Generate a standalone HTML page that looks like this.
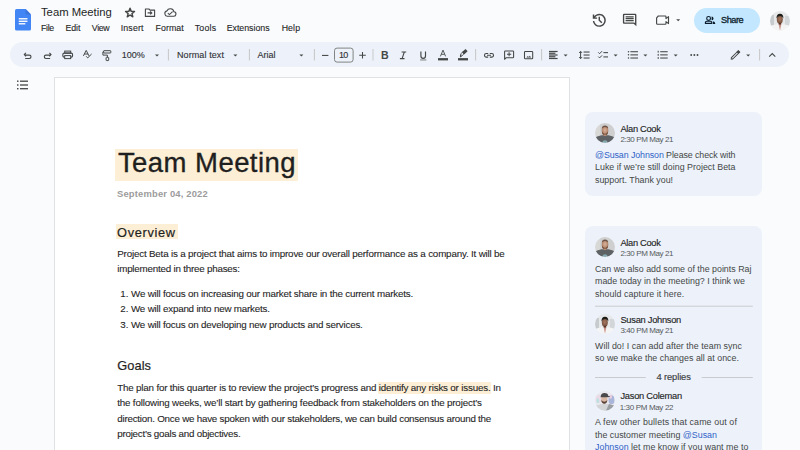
<!DOCTYPE html>
<html><head><meta charset="utf-8">
<style>
html,body{margin:0;padding:0;}
body{width:800px;height:450px;overflow:hidden;position:relative;background:#f9fbfd;font-family:"Liberation Sans",sans-serif;}
.t{position:absolute;white-space:nowrap;line-height:1;}
.bgx{position:absolute;}
.hl{}
.mention{color:#2f62c9;}
#toolbar{left:10px;top:42px;width:779px;height:25px;border-radius:12.5px;background:#edf2fa;}
#page{left:54px;top:77px;width:516px;height:400px;background:#fff;border:1px solid #dfe1e3;box-sizing:border-box;}
#share_btn{left:694px;top:7.5px;width:66px;height:25px;border-radius:12.5px;background:#c2e7ff;}
.card{position:absolute;left:585px;width:177px;background:#edf2fa;border-radius:8px;}
#hl_title{left:115px;top:149.3px;width:182.5px;height:32.2px;background:#fdefd6;}
#hl_ov{left:115.5px;top:224px;width:62px;height:14.8px;background:#fdefd6;}
#hl_p2{left:378.4px;top:382.4px;width:112.6px;height:11.2px;background:#fdefd6;}
svg{position:absolute;left:0;top:0;}
</style></head><body>
<div class="bgx" id="toolbar"></div>
<div class="bgx" id="page"></div>
<div class="bgx" id="share_btn"></div>
<div class="bgx card" id="card1" style="top:112.3px;height:83.6px;"></div>
<div class="bgx card" id="card2" style="top:226.4px;height:260px;"></div>
<div class="bgx" id="hl_title"></div>
<div class="bgx" id="hl_ov"></div>
<div class="bgx" id="hl_p2"></div>
<svg class="bgx" width="800" height="450" viewBox="0 0 800 450">
<g transform="translate(15,9)">
<path d="M1.6 0H10.6L16 5.4V19.9Q16 21.5 14.4 21.5H1.6Q0 21.5 0 19.9V1.6Q0 0 1.6 0Z" fill="#4285f4"/>
<path d="M10.6 0V4Q10.6 5.4 12 5.4H16Z" fill="#3b76dc"/>
<rect x="3.75" y="9.1" width="8.7" height="1.35" fill="#fff"/>
<rect x="3.75" y="11.6" width="8.7" height="1.35" fill="#fff"/>
<rect x="3.75" y="14.1" width="6.6" height="1.35" fill="#fff"/>
</g>
<polygon points="130.05,8.30 131.23,11.38 134.52,11.55 131.95,13.62 132.81,16.80 130.05,15.00 127.29,16.80 128.15,13.62 125.58,11.55 128.87,11.38" fill="none" stroke="#444746" stroke-width="1.45" stroke-linejoin="round"/>
<path d="M145.4 9.0H148.9L150 10.1H154.6V16.4H145.4Z" fill="none" stroke="#444746" stroke-width="1.1" stroke-linejoin="round"/>
<path d="M147.6 12.9H151.6M150.2 11.4L151.8 12.9L150.2 14.4" fill="none" stroke="#444746" stroke-width="1.1"/>
<path d="M167.2 16.2H173.6A2.2 2.2 0 0 0 173.9 11.8A3.7 3.7 0 0 0 166.9 10.9A2.7 2.7 0 0 0 167.2 16.2Z" fill="none" stroke="#444746" stroke-width="1.1"/>
<path d="M167.8 13.2L169.4 14.6L172.6 11.6" fill="none" stroke="#444746" stroke-width="1.05"/>
<g transform="translate(590.6,29.0) scale(0.0181)"><path fill="#444746" d="M480-120q-138 0-240.5-91.5T122-440h82q14 104 92.5 172T480-200q117 0 198.5-81.5T760-480q0-117-81.5-198.5T480-760q-69 0-129 32t-101 88h110v80H120v-240h80v94q51-64 124.5-99T480-840q75 0 140.5 28.5t114 77q48.5 48.5 77 114T840-480q0 75-28.5 140.5t-77 114q-48.5 48.5-114 77T480-120Zm112-192L440-464v-216h80v184l128 128-56 56Z"/></g>
<g transform="translate(621.55,12.5) scale(0.675,0.62)"><path fill="#444746" d="M21.99 4c0-1.1-.89-2-1.99-2H4c-1.1 0-2 .9-2 2v12c0 1.1.9 2 2 2h14l4 4-.01-18zM20 4v13.17L18.83 16H4V4h16zM6 12h12v2H6zm0-3h12v2H6zm0-3h12v2H6z"/></g>
<path d="M658.3 16.0H665.2Q666.0 16.0 666.0 16.8V18.6L668.5 16.6V23.6L666.0 21.6V23.4Q666.0 24.2 665.2 24.2H657.4Q656.6 24.2 656.6 23.4V17.8Z" fill="none" stroke="#444746" stroke-width="1.15" stroke-linejoin="round"/>
<path d="M676.2 19.3H680.2L678.2 21.3Z" fill="#444746"/>
<circle cx="708.6" cy="18.4" r="1.9" fill="none" stroke="#0b1c2c" stroke-width="1.15"/>
<path d="M705.4 23.4V22.5Q705.4 21.2 706.8 21.2H710.4Q711.8 21.2 711.8 22.5V23.4Z" fill="none" stroke="#0b1c2c" stroke-width="1.15" stroke-linejoin="round"/>
<path d="M711.6 16.5A1.9 1.9 0 0 1 711.6 20.3Z" fill="#0b1c2c"/>
<path d="M712.9 21.3Q715.2 21.6 715.2 23.2V24H712.9Z" fill="#0b1c2c"/>
<path d="M25.9 52.9L24.3 54.6L25.9 56.4M24.5 55.1H29.3A1.7 1.7 0 0 1 29.3 58.5H25.2" fill="none" stroke="#444746" stroke-width="1.1"/>
<path d="M49.4 52.9L51 54.6L49.4 56.4M50.8 55.1H46A1.7 1.7 0 0 0 46 58.5H50.1" fill="none" stroke="#444746" stroke-width="1.1"/>
<rect x="64.7" y="51.1" width="6.0" height="2.0" fill="none" stroke="#444746" stroke-width="1"/>
<rect x="62.85" y="53.1" width="9.7" height="4.0" rx="1.3" fill="none" stroke="#444746" stroke-width="1.1"/>
<rect x="64.7" y="55.6" width="6.0" height="3.0" fill="#edf2fa" stroke="#444746" stroke-width="1"/>
<path d="M83.4 55.9L86.2 50.4L89.0 55.9M84.4 54.0H88.0" fill="none" stroke="#444746" stroke-width="1"/>
<path d="M86.2 56.3L87.7 57.9L91.6 54.0" fill="none" stroke="#444746" stroke-width="1"/>
<rect x="103.6" y="50.7" width="7.2" height="2.3" rx="0.4" fill="none" stroke="#444746" stroke-width="1"/>
<path d="M103.6 51.9H102.9V55.1H107.4V57.2" fill="none" stroke="#444746" stroke-width="1"/>
<rect x="106.1" y="57.3" width="2.6" height="3.3" rx="0.5" fill="none" stroke="#444746" stroke-width="1"/>
<path d="M155 54.4H159L157 56.4Z" fill="#444746"/>
<path d="M233.4 54.4H237.4L235.4 56.4Z" fill="#444746"/>
<path d="M299.4 54.4H303.4L301.4 56.4Z" fill="#444746"/>
<path d="M563.6 54.4H567.6L565.6 56.4Z" fill="#444746"/>
<path d="M613.6 54.4H617.6L615.6 56.4Z" fill="#444746"/>
<path d="M643.4 54.4H647.4L645.4 56.4Z" fill="#444746"/>
<path d="M673.7 54.4H677.7L675.7 56.4Z" fill="#444746"/>
<path d="M746.2 54.4H750.2L748.2 56.4Z" fill="#444746"/>
<rect x="167.9" y="49" width="1" height="11.5" fill="#c7c7c7"/>
<rect x="248.9" y="49" width="1" height="11.5" fill="#c7c7c7"/>
<rect x="313.9" y="49" width="1" height="11.5" fill="#c7c7c7"/>
<rect x="372.5" y="49" width="1" height="11.5" fill="#c7c7c7"/>
<rect x="475.1" y="49" width="1" height="11.5" fill="#c7c7c7"/>
<rect x="541.1" y="49" width="1" height="11.5" fill="#c7c7c7"/>
<rect x="759.1" y="49" width="1" height="11.5" fill="#c7c7c7"/>
<rect x="322" y="54.9" width="6.4" height="1.05" fill="#444746"/>
<rect x="334.5" y="48.1" width="18.6" height="14" rx="2.5" fill="none" stroke="#747775" stroke-width="0.9"/>
<path d="M359.2 55.25H365.8M362.5 52V58.5" stroke="#444746" stroke-width="1.05"/>
<text x="380.9" y="59" font-family="Liberation Sans" font-weight="700" font-size="10.6" fill="#444746">B</text>
<path d="M401.6 52.0H406.2M399.9 58.6H404.5M404.3 52.0L402.1 58.6" fill="none" stroke="#444746" stroke-width="1.1"/>
<path d="M420.9 51.6V56.0A2.3 2.3 0 0 0 425.5 56.0V51.6" fill="none" stroke="#444746" stroke-width="1.15"/>
<rect x="420.1" y="59.5" width="6.3" height="0.9" fill="#444746" opacity="0.75"/>
<path d="M440.4 56.4L443 50.1L445.6 56.4M441.4 54.3H444.6" fill="none" stroke="#444746" stroke-width="0.9"/>
<rect x="438" y="58.1" width="10" height="2.3" fill="#444746"/>
<g transform="translate(463.2,53.1) rotate(-42) scale(0.88)"><rect x="-0.2" y="-1.75" width="5.4" height="3.5" rx="0.4" fill="#444746"/><rect x="-3.0" y="-1.3" width="2.9" height="2.6" fill="none" stroke="#444746" stroke-width="0.9"/><path d="M-3.4 -1.3L-5.4 0.3V1.7H-3.4Z" fill="#444746"/></g>
<rect x="458" y="58.1" width="10" height="2.3" fill="#444746"/>
<path d="M488.2 53.5H486.3A1.8 1.8 0 0 0 486.3 57.1H488.2M489.8 53.5H491.7A1.8 1.8 0 0 1 491.7 57.1H489.8M487 55.3H491" fill="none" stroke="#444746" stroke-width="1.1"/>
<path d="M504.6 59.3V51.6Q504.6 50.9 505.3 50.9H512.9Q513.6 50.9 513.6 51.6V57.0Q513.6 57.7 512.9 57.7H506.2Z" fill="none" stroke="#444746" stroke-width="1.05" stroke-linejoin="round"/>
<path d="M507 54.3H511.2M509.1 52.3V56.3" stroke="#444746" stroke-width="1.05"/>
<rect x="524.5" y="51.5" width="8.2" height="7.2" rx="0.8" fill="none" stroke="#444746" stroke-width="1.05"/>
<path d="M526.4 57.5L527.8 56.0L528.8 57.0L529.8 55.7L531.2 57.5Z" fill="#444746"/>
<rect x="549" y="50.9" width="8.6" height="1.2" fill="#444746"/>
<rect x="549" y="52.65" width="6.4" height="1.2" fill="#444746"/>
<rect x="549" y="54.4" width="8.6" height="1.2" fill="#444746"/>
<rect x="549" y="56.15" width="6.4" height="1.2" fill="#444746"/>
<rect x="549" y="57.9" width="8.6" height="1.2" fill="#444746"/>
<path d="M580.6 51.6V58.4M579.2 52.9L580.6 51.3L582.0 52.9M579.2 57.1L580.6 58.7L582.0 57.1" fill="none" stroke="#444746" stroke-width="1"/>
<rect x="583.6" y="51.5" width="6" height="1.05" fill="#444746"/>
<rect x="583.6" y="54.5" width="6" height="1.05" fill="#444746"/>
<rect x="583.6" y="57.5" width="6" height="1.05" fill="#444746"/>
<path d="M598.3 52.4L599.6 53.7L602 51.2M598.3 56.6L599.6 57.9L602 55.4" fill="none" stroke="#444746" stroke-width="1"/>
<rect x="603.4" y="52.1" width="4.6" height="1.05" fill="#444746"/>
<rect x="603.4" y="56.4" width="4.6" height="1.05" fill="#444746"/>
<circle cx="628.5" cy="51.7" r="0.75" fill="#444746"/>
<rect x="630.4" y="51.2" width="7.6" height="1.05" fill="#444746"/>
<circle cx="628.5" cy="54.85" r="0.75" fill="#444746"/>
<rect x="630.4" y="54.35" width="7.6" height="1.05" fill="#444746"/>
<circle cx="628.5" cy="58.0" r="0.75" fill="#444746"/>
<rect x="630.4" y="57.5" width="7.6" height="1.05" fill="#444746"/>
<rect x="657.6" y="50.800000000000004" width="1.3" height="1.8" fill="#444746" opacity="0.8"/>
<rect x="660.2" y="51.2" width="7.5" height="1.05" fill="#444746"/>
<rect x="657.6" y="53.95" width="1.3" height="1.8" fill="#444746" opacity="0.8"/>
<rect x="660.2" y="54.35" width="7.5" height="1.05" fill="#444746"/>
<rect x="657.6" y="57.1" width="1.3" height="1.8" fill="#444746" opacity="0.8"/>
<rect x="660.2" y="57.5" width="7.5" height="1.05" fill="#444746"/>
<circle cx="691.2" cy="55" r="0.95" fill="#444746"/>
<circle cx="694.35" cy="55" r="0.95" fill="#444746"/>
<circle cx="697.5" cy="55" r="0.95" fill="#444746"/>
<g transform="translate(735.4,55.0) rotate(-45)"><rect x="-5.0" y="-0.95" width="8.6" height="1.9" rx="0.3" fill="none" stroke="#444746" stroke-width="1"/><rect x="3.0" y="-1.5" width="2.7" height="3.0" rx="0.5" fill="#444746"/><path d="M-5.6 -1.0L-6.6 0L-5.6 1.0Z" fill="#444746"/></g>
<path d="M769.2 56.7L772.25 53.6L775.3 56.7" fill="none" stroke="#444746" stroke-width="1.05"/>
<rect x="17.0" y="80.5" width="1.5" height="1.4" fill="#444746"/>
<rect x="20.0" y="80.55" width="8" height="1.3" fill="#444746"/>
<rect x="17.0" y="84.3" width="1.5" height="1.4" fill="#444746"/>
<rect x="20.0" y="84.35" width="8" height="1.3" fill="#444746"/>
<rect x="17.0" y="88.0" width="1.5" height="1.4" fill="#444746"/>
<rect x="20.0" y="88.05" width="8" height="1.3" fill="#444746"/>
<rect x="595" y="305.7" width="157.8" height="1" fill="#c9cbcf"/>
<rect x="595" y="377" width="50.8" height="1" fill="#c9cbcf"/>
<rect x="701.7" y="377" width="51.1" height="1" fill="#c9cbcf"/>
<defs>
<clipPath id="av1"><circle cx="10" cy="10" r="10"/></clipPath>
<radialGradient id="skinA" cx="50%" cy="45%" r="55%"><stop offset="0" stop-color="#d9b39a"/><stop offset="1" stop-color="#a8785e"/></radialGradient>
<radialGradient id="skinS" cx="50%" cy="45%" r="55%"><stop offset="0" stop-color="#a87860"/><stop offset="1" stop-color="#74503e"/></radialGradient>
<filter id="blur03" x="-20%" y="-20%" width="140%" height="140%"><feGaussianBlur stdDeviation="0.45"/></filter>
</defs>
<g transform="translate(595,123)" clip-path="url(#av1)"><g filter="url(#blur03)">
<rect x="-2" y="-2" width="24" height="24" fill="#cfcfcf"/>
<rect x="-2" y="-2" width="7" height="24" fill="#d8d8d6"/>
<path d="M-2 20V16Q2 12.6 6.5 12.2H13.5Q18 12.6 22 16V22H-2Z" fill="#5e6265"/>
<ellipse cx="10" cy="18.8" rx="2.4" ry="1.5" fill="#86aab0"/>
<ellipse cx="10" cy="7.6" rx="3.3" ry="4.6" fill="url(#skinA)"/>
<path d="M6.9 8.5Q7.2 12.4 10 12.6Q12.8 12.4 13.1 8.5Q12 10.8 10 10.9Q8 10.8 6.9 8.5Z" fill="#6b4a3a"/>
<path d="M6.8 5.5Q7 2.6 10 2.5Q13 2.6 13.2 5.5Q12 4 10 4Q8 4 6.8 5.5Z" fill="#6d5346"/>
<rect x="8.6" y="11.5" width="2.8" height="1.5" fill="#b58a70"/>
</g></g>
<g transform="translate(595,237)" clip-path="url(#av1)"><g filter="url(#blur03)">
<rect x="-2" y="-2" width="24" height="24" fill="#cfcfcf"/>
<rect x="-2" y="-2" width="7" height="24" fill="#d8d8d6"/>
<path d="M-2 20V16Q2 12.6 6.5 12.2H13.5Q18 12.6 22 16V22H-2Z" fill="#5e6265"/>
<ellipse cx="10" cy="18.8" rx="2.4" ry="1.5" fill="#86aab0"/>
<ellipse cx="10" cy="7.6" rx="3.3" ry="4.6" fill="url(#skinA)"/>
<path d="M6.9 8.5Q7.2 12.4 10 12.6Q12.8 12.4 13.1 8.5Q12 10.8 10 10.9Q8 10.8 6.9 8.5Z" fill="#6b4a3a"/>
<path d="M6.8 5.5Q7 2.6 10 2.5Q13 2.6 13.2 5.5Q12 4 10 4Q8 4 6.8 5.5Z" fill="#6d5346"/>
<rect x="8.6" y="11.5" width="2.8" height="1.5" fill="#b58a70"/>
</g></g>
<g transform="translate(595,314)" clip-path="url(#av1)"><g filter="url(#blur03)">
<rect x="-2" y="-2" width="24" height="24" fill="#e6e8ea"/>
<rect x="-2" y="4" width="6" height="12" fill="#c8cbcd"/>
<rect x="15" y="5" width="6" height="11" fill="#d3d6d8"/>
<path d="M-2 22V17Q2 13.5 6.5 13.2H13.5Q18 13.5 22 17V22Z" fill="#f4f4f4"/>
<path d="M8.6 13.2L10 19.5L11.4 13.2Z" fill="#c9928a"/>
<ellipse cx="9.8" cy="8.6" rx="3.0" ry="4.2" fill="url(#skinS)"/>
<path d="M6.5 7.6Q6.3 2.8 10 2.7Q13.6 2.8 13.3 7.6Q12.8 5 10 4.9Q7.2 5 6.5 7.6Z" fill="#1e1a18"/>
<rect x="8.7" y="11.8" width="2.4" height="1.8" fill="#5a3628"/>
</g></g>
<g transform="translate(595,390.7)" clip-path="url(#av1)"><g filter="url(#blur03)">
<rect x="-2" y="-2" width="24" height="24" fill="#e9e9ef"/>
<ellipse cx="3.5" cy="8" rx="3" ry="4" fill="#eadbe6"/>
<ellipse cx="2.8" cy="10" rx="1.5" ry="2.5" fill="#bfe0e2"/>
<ellipse cx="16.5" cy="9" rx="3" ry="4.5" fill="#aab5da"/>
<ellipse cx="15.5" cy="6" rx="1.6" ry="2" fill="#ebcfe0"/>
<path d="M-2 22V17Q2 14 7 13.2H13Q18 14 22 17V22Z" fill="#d2d4d6"/>
<path d="M10 22L14 13.2Q18 14 22 17V22Z" fill="#9a9da1"/>
<ellipse cx="9.3" cy="8.8" rx="3.1" ry="4.0" fill="#d8b7a4"/>
<path d="M6.2 9.3Q6.6 13 9.3 13Q12 13 12.4 9.3Q11.3 11 9.3 11Q7.3 11 6.2 9.3Z" fill="#5a4238"/>
<path d="M5.6 6.3Q5.8 2.4 9.5 2.4Q13.2 2.6 13.3 5.2L15.2 5.6Q15 6.6 12.8 6.6H5.6Z" fill="#4a4a4c"/>
</g></g>
<g transform="translate(770,11)" clip-path="url(#av1)"><g filter="url(#blur03)">
<rect x="-2" y="-2" width="24" height="24" fill="#e6e8ea"/>
<rect x="-2" y="4" width="6" height="12" fill="#c8cbcd"/>
<rect x="15" y="5" width="6" height="11" fill="#d3d6d8"/>
<path d="M-2 22V17Q2 13.5 6.5 13.2H13.5Q18 13.5 22 17V22Z" fill="#f4f4f4"/>
<path d="M8.6 13.2L10 19.5L11.4 13.2Z" fill="#c9928a"/>
<ellipse cx="9.8" cy="8.6" rx="3.0" ry="4.2" fill="url(#skinS)"/>
<path d="M6.5 7.6Q6.3 2.8 10 2.7Q13.6 2.8 13.3 7.6Q12.8 5 10 4.9Q7.2 5 6.5 7.6Z" fill="#1e1a18"/>
<rect x="8.7" y="11.8" width="2.4" height="1.8" fill="#5a3628"/>
</g></g>

</svg>
<div class="t" id="h_title" style="left:41.00px;top:7.23px;font-size:11.3px;font-weight:400;color:#1f1f1f;letter-spacing:-0.025px;">Team Meeting</div>
<div class="t" id="m_File" style="left:41.00px;top:23.85px;font-size:8.8px;font-weight:400;color:#1f1f1f;letter-spacing:-0.330px;-webkit-text-stroke:0.1px #1f1f1f">File</div>
<div class="t" id="m_Edit" style="left:65.56px;top:23.85px;font-size:8.8px;font-weight:400;color:#1f1f1f;letter-spacing:-0.120px;-webkit-text-stroke:0.1px #1f1f1f">Edit</div>
<div class="t" id="m_View" style="left:91.78px;top:23.85px;font-size:8.8px;font-weight:400;color:#1f1f1f;letter-spacing:-0.330px;-webkit-text-stroke:0.1px #1f1f1f">View</div>
<div class="t" id="m_Insert" style="left:120.66px;top:23.85px;font-size:8.8px;font-weight:400;color:#1f1f1f;letter-spacing:0.162px;-webkit-text-stroke:0.1px #1f1f1f">Insert</div>
<div class="t" id="m_Format" style="left:155.56px;top:23.85px;font-size:8.8px;font-weight:400;color:#1f1f1f;letter-spacing:0.072px;-webkit-text-stroke:0.1px #1f1f1f">Format</div>
<div class="t" id="m_Tools" style="left:194.66px;top:23.85px;font-size:8.8px;font-weight:400;color:#1f1f1f;letter-spacing:0.225px;-webkit-text-stroke:0.1px #1f1f1f">Tools</div>
<div class="t" id="m_Extensions" style="left:226.66px;top:23.85px;font-size:8.8px;font-weight:400;color:#1f1f1f;letter-spacing:-0.010px;-webkit-text-stroke:0.1px #1f1f1f">Extensions</div>
<div class="t" id="m_Help" style="left:281.66px;top:23.85px;font-size:8.8px;font-weight:400;color:#1f1f1f;letter-spacing:0.090px;-webkit-text-stroke:0.1px #1f1f1f">Help</div>
<div class="t" id="share" style="left:721.00px;top:15.91px;font-size:9.2px;font-weight:400;color:#0b1c2c;letter-spacing:-0.472px;-webkit-text-stroke:0.3px #0b1c2c">Share</div>
<div class="t" id="tb_zoom" style="left:121.76px;top:50.78px;font-size:9px;font-weight:400;color:#303134;letter-spacing:0.000px;-webkit-text-stroke:0.12px #303134">100%</div>
<div class="t" id="tb_style" style="left:177.00px;top:50.58px;font-size:9px;font-weight:400;color:#303134;letter-spacing:0.090px;-webkit-text-stroke:0.12px #303134">Normal text</div>
<div class="t" id="tb_font" style="left:257.56px;top:50.58px;font-size:9px;font-weight:400;color:#303134;letter-spacing:0.000px;-webkit-text-stroke:0.12px #303134">Arial</div>
<div class="t" id="tb_size" style="left:339.00px;top:50.58px;font-size:9px;font-weight:400;color:#303134;letter-spacing:-0.720px;-webkit-text-stroke:0.12px #303134">10</div>
<div class="t" id="d_title" style="left:117.90px;top:149.21px;font-size:27.5px;font-weight:400;color:#1f1f1f;letter-spacing:0.450px;-webkit-text-stroke:0.35px #1f1f1f">Team Meeting</div>
<div class="t" id="d_date" style="left:117.00px;top:188.84px;font-size:9.4px;font-weight:700;color:#9c9c9c;letter-spacing:0.185px;">September 04, 2022</div>
<div class="t" id="d_ov" style="left:117.10px;top:226.56px;font-size:12.8px;font-weight:400;color:#1f1f1f;letter-spacing:0.643px;-webkit-text-stroke:0.2px #1f1f1f">Overview</div>
<div class="t" id="p1l1" style="left:117.22px;top:249.10px;font-size:9.8px;font-weight:400;color:#1f1f1f;letter-spacing:-0.179px;-webkit-text-stroke:0.1px #1f1f1f">Project Beta is a project that aims to improve our overall performance as a company. It will be</div>
<div class="t" id="p1l2" style="left:117.22px;top:264.10px;font-size:9.8px;font-weight:400;color:#1f1f1f;letter-spacing:-0.213px;-webkit-text-stroke:0.1px #1f1f1f">implemented in three phases:</div>
<div class="t" id="li0" style="left:131.00px;top:289.00px;font-size:9.8px;font-weight:400;color:#1f1f1f;letter-spacing:-0.191px;-webkit-text-stroke:0.1px #1f1f1f">We will focus on increasing our market share in the current markets.</div>
<div class="t" id="ln0" style="left:120.22px;top:289.00px;font-size:9.8px;font-weight:400;color:#1f1f1f;letter-spacing:0.000px;-webkit-text-stroke:0.1px #1f1f1f">1.</div>
<div class="t" id="li1" style="left:131.00px;top:304.40px;font-size:9.8px;font-weight:400;color:#1f1f1f;letter-spacing:-0.203px;-webkit-text-stroke:0.1px #1f1f1f">We will expand into new markets.</div>
<div class="t" id="ln1" style="left:120.22px;top:304.40px;font-size:9.8px;font-weight:400;color:#1f1f1f;letter-spacing:0.000px;-webkit-text-stroke:0.1px #1f1f1f">2.</div>
<div class="t" id="li2" style="left:131.00px;top:319.60px;font-size:9.8px;font-weight:400;color:#1f1f1f;letter-spacing:-0.195px;-webkit-text-stroke:0.1px #1f1f1f">We will focus on developing new products and services.</div>
<div class="t" id="ln2" style="left:120.22px;top:319.60px;font-size:9.8px;font-weight:400;color:#1f1f1f;letter-spacing:0.000px;-webkit-text-stroke:0.1px #1f1f1f">3.</div>
<div class="t" id="d_goals" style="left:117.22px;top:360.26px;font-size:12.8px;font-weight:400;color:#1f1f1f;letter-spacing:0.090px;-webkit-text-stroke:0.2px #1f1f1f">Goals</div>
<div class="t" id="p2l1" style="left:117.22px;top:382.90px;font-size:9.8px;font-weight:400;color:#1f1f1f;letter-spacing:-0.185px;-webkit-text-stroke:0.1px #1f1f1f">The plan for this quarter is to review the project’s progress and <span class="hl">identify any risks or issues.</span> In</div>
<div class="t" id="p2l2" style="left:117.22px;top:398.20px;font-size:9.8px;font-weight:400;color:#1f1f1f;letter-spacing:-0.173px;-webkit-text-stroke:0.1px #1f1f1f">the following weeks, we’ll start by gathering feedback from stakeholders on the project’s</div>
<div class="t" id="p2l3" style="left:117.22px;top:413.80px;font-size:9.8px;font-weight:400;color:#1f1f1f;letter-spacing:-0.229px;-webkit-text-stroke:0.1px #1f1f1f">direction. Once we have spoken with our stakeholders, we can build consensus around the</div>
<div class="t" id="p2l4" style="left:117.22px;top:429.30px;font-size:9.8px;font-weight:400;color:#1f1f1f;letter-spacing:-0.237px;-webkit-text-stroke:0.1px #1f1f1f">project’s goals and objectives.</div>
<div class="t" id="c1_n" style="left:620.44px;top:125.02px;font-size:9.3px;font-weight:400;color:#1f1f1f;letter-spacing:-0.315px;-webkit-text-stroke:0.14px #1f1f1f">Alan Cook</div>
<div class="t" id="c1_t" style="left:620.44px;top:136.13px;font-size:8.0px;font-weight:400;color:#55595c;letter-spacing:-0.401px;">2:30 PM May 21</div>
<div class="t" id="c1l1" style="left:595.00px;top:150.51px;font-size:8.85px;font-weight:400;color:#444746;letter-spacing:-0.087px;"><span class="mention">@Susan Johnson</span> Please check with</div>
<div class="t" id="c1l2" style="left:595.00px;top:163.21px;font-size:8.85px;font-weight:400;color:#444746;letter-spacing:0.024px;">Luke if we’re still doing Project Beta</div>
<div class="t" id="c1l3" style="left:595.00px;top:175.81px;font-size:8.85px;font-weight:400;color:#444746;letter-spacing:0.000px;">support. Thank you!</div>
<div class="t" id="c2_n" style="left:620.44px;top:238.72px;font-size:9.3px;font-weight:400;color:#1f1f1f;letter-spacing:-0.315px;-webkit-text-stroke:0.14px #1f1f1f">Alan Cook</div>
<div class="t" id="c2_t" style="left:620.44px;top:250.03px;font-size:8.0px;font-weight:400;color:#55595c;letter-spacing:-0.401px;">2:30 PM May 21</div>
<div class="t" id="c2l1" style="left:595.00px;top:264.81px;font-size:8.85px;font-weight:400;color:#444746;letter-spacing:0.002px;">Can we also add some of the points Raj</div>
<div class="t" id="c2l2" style="left:595.00px;top:277.21px;font-size:8.85px;font-weight:400;color:#444746;letter-spacing:0.025px;">made today in the meeting? I think we</div>
<div class="t" id="c2l3" style="left:595.00px;top:289.51px;font-size:8.85px;font-weight:400;color:#444746;letter-spacing:0.082px;">should capture it here.</div>
<div class="t" id="c3_n" style="left:620.44px;top:315.52px;font-size:9.3px;font-weight:400;color:#1f1f1f;letter-spacing:-0.270px;-webkit-text-stroke:0.14px #1f1f1f">Susan Johnson</div>
<div class="t" id="c3_t" style="left:620.44px;top:326.83px;font-size:8.0px;font-weight:400;color:#55595c;letter-spacing:-0.401px;">3:40 PM May 21</div>
<div class="t" id="c3l1" style="left:595.00px;top:341.51px;font-size:8.85px;font-weight:400;color:#444746;letter-spacing:0.036px;">Will do! I can add after the team sync</div>
<div class="t" id="c3l2" style="left:595.00px;top:353.81px;font-size:8.85px;font-weight:400;color:#444746;letter-spacing:0.026px;">so we make the changes all at once.</div>
<div class="t" id="c_rep" style="left:656.44px;top:372.44px;font-size:9.4px;font-weight:400;color:#3c4043;letter-spacing:-0.125px;-webkit-text-stroke:0.15px #3c4043">4 replies</div>
<div class="t" id="c4_n" style="left:620.44px;top:392.32px;font-size:9.3px;font-weight:400;color:#1f1f1f;letter-spacing:-0.247px;-webkit-text-stroke:0.14px #1f1f1f">Jason Coleman</div>
<div class="t" id="c4_t" style="left:619.64px;top:403.53px;font-size:8.0px;font-weight:400;color:#55595c;letter-spacing:-0.339px;">1:30 PM May 22</div>
<div class="t" id="c4l1" style="left:595.00px;top:418.41px;font-size:8.85px;font-weight:400;color:#444746;letter-spacing:0.106px;">A few other bullets that came out of</div>
<div class="t" id="c4l2" style="left:595.00px;top:430.51px;font-size:8.85px;font-weight:400;color:#444746;letter-spacing:0.015px;">the customer meeting <span class="mention">@Susan</span></div>
<div class="t" id="c4l3" style="left:595.00px;top:443.01px;font-size:8.85px;font-weight:400;color:#444746;letter-spacing:0.025px;"><span class="mention">Johnson</span> let me know if you want me to</div>
</body></html>
